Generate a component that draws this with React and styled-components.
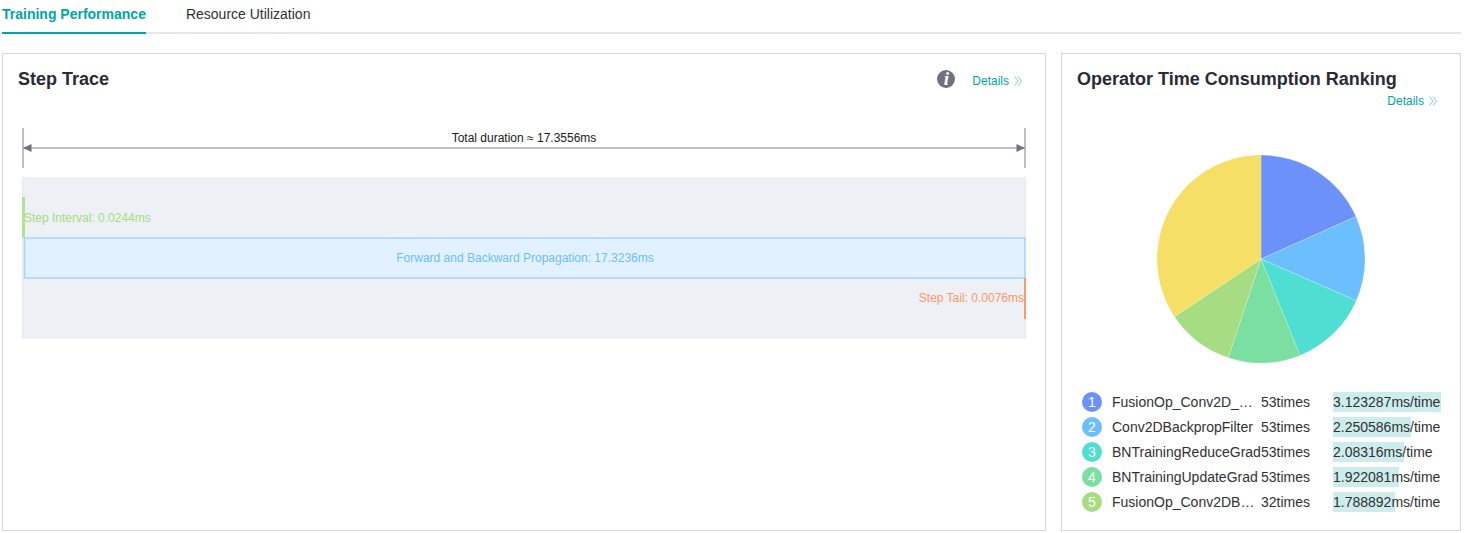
import React from "react";
import styled, { createGlobalStyle } from "styled-components";

const GlobalStyle = createGlobalStyle`
  html, body {
    margin: 0;
    padding: 0;
    background: #fff;
    font-family: "Liberation Sans", Arial, sans-serif;
  }
  * {
    box-sizing: border-box;
  }
`;

const St = {
  Page: styled.div`
    width: 1472px;
    height: 533px;
    padding: 0 11px 2px 2px;
    display: flex;
    flex-direction: column;
    overflow: hidden;
  `,
  Tabs: styled.div`
    display: flex;
    height: 34px;
    border-bottom: 2px solid #e4e7ed;
    flex-shrink: 0;
  `,
  Tab: styled.div`
    height: 34px;
    line-height: 29px;
    font-size: 14px;
    margin-right: 40px;
    font-weight: ${({ $active }) => ($active ? 700 : 400)};
    color: ${({ $active }) => ($active ? "#00a5a7" : "#303133")};
    border-bottom: 2px solid ${({ $active }) => ($active ? "#00a5a7" : "transparent")};
  `,
  Panels: styled.div`
    display: flex;
    gap: 15px;
    margin-top: 19px;
    flex: 1;
    min-height: 0;
  `,
  Panel: styled.section`
    border: 1px solid #d9d9d9;
    width: ${({ $width }) => $width}px;
    flex-shrink: 0;
    display: flex;
    flex-direction: column;
  `,
  Header: styled.div`
    display: flex;
    justify-content: space-between;
    height: 66px;
    padding: 15px 23px 0 15px;
  `,
  Title: styled.h2`
    margin: 0;
    font-size: 18px;
    line-height: 20px;
    font-weight: 700;
    color: #282b33;
  `,
  HeaderTools: styled.div`
    display: flex;
    align-items: flex-start;
    gap: 17px;
    padding-top: 2px;
  `,
  InfoIcon: styled.span`
    width: 18px;
    height: 18px;
    margin-top: -1px;
    border-radius: 50%;
    background: #6c7280;
    color: #fff;
    font-family: "Liberation Serif", serif;
    font-style: italic;
    font-weight: 700;
    font-size: 19px;
    line-height: 18px;
    text-align: center;
  `,
  Details: styled.a`
    display: inline-flex;
    align-items: center;
    gap: 5px;
    font-size: 12px;
    line-height: 20px;
    color: #00a5a7;
    svg {
      display: block;
    }
  `,
  Chart: styled.svg`
    display: block;
    text {
      font-family: "Liberation Sans", Arial, sans-serif;
      font-size: 12px;
    }
  `,
  RankHeader: styled.div`
    padding: 15px 15px 0;
  `,
  RankDetails: styled.div`
    display: flex;
    justify-content: flex-end;
    padding: 2px 8px 0 0;
    height: 22px;
  `,
  PieWrap: styled.div`
    height: 281px;
    flex-shrink: 0;
  `,
  List: styled.ul`
    list-style: none;
    margin: 0;
    padding: 0 0 0 20px;
    display: flex;
    flex-direction: column;
    gap: 5px;
  `,
  Row: styled.li`
    display: flex;
    align-items: center;
    height: 20px;
    font-size: 14px;
    color: #303133;
  `,
  Badge: styled.span`
    width: 20px;
    height: 20px;
    border-radius: 50%;
    background: ${({ $color }) => $color};
    color: #fff;
    text-align: center;
    line-height: 20px;
    flex-shrink: 0;
  `,
  Name: styled.span`
    width: 149px;
    margin-left: 10px;
    white-space: nowrap;
    overflow: hidden;
    text-overflow: ellipsis;
    flex-shrink: 0;
  `,
  Times: styled.span`
    width: 72px;
    flex-shrink: 0;
  `,
  Cost: styled.span`
    position: relative;
    white-space: nowrap;
    line-height: 20px;
  `,
  CostBar: styled.i`
    position: absolute;
    left: 0;
    top: 0;
    bottom: 0;
    background: #ccedeb;
  `,
  CostText: styled.span`
    position: relative;
  `,
};

const ChevronsRight = () => (
  <svg width="8" height="10" viewBox="0 0 8 10" fill="none" stroke="#8cc9cb" strokeWidth="1">
    <path d="M0.5 0.5L4 5L0.5 9.5" />
    <path d="M4 0.5L7.5 5L4 9.5" />
  </svg>
);

const StepTraceChart = () => (
  <St.Chart width="1042" height="220" viewBox="3 120 1042 220">
    <rect x="22.5" y="178" width="1003" height="160" fill="#edf0f5" stroke="#e8e9ec" />
    <path d="M23 128V168M1025 128V168" stroke="#a9acb5" strokeWidth="1.5" />
    <path d="M23 148H1025" stroke="#a9acb5" strokeWidth="1.5" />
    <path d="M23 148L31.5 144V152Z" fill="#6c7280" />
    <path d="M1025 148L1016.5 144V152Z" fill="#6c7280" />
    <text x="524" y="142" textAnchor="middle" fill="#1a1a1a">Total duration ≈ 17.3556ms</text>

    <rect x="22" y="197" width="3" height="41" fill="#b4e295" />
    <text x="24" y="222" fill="#a6dd82">Step Interval: 0.0244ms</text>

    <rect x="24.5" y="238" width="1000.3" height="40" fill="#e1f1ff" stroke="#a5d6ff" strokeWidth="1.5" />
    <text x="525" y="262" textAnchor="middle" fill="#6cbfff">Forward and Backward Propagation: 17.3236ms</text>

    <rect x="1024" y="278" width="2" height="41" fill="#ff9966" />
    <text x="1024" y="302" textAnchor="end" fill="#ff9966">Step Tail: 0.0076ms</text>
  </St.Chart>
);

const slices = [
  { color: "#6c92fa", to: 65.9 },
  { color: "#6cbfff", to: 113.6 },
  { color: "#4eded2", to: 158 },
  { color: "#7adfa0", to: 198.4 },
  { color: "#a6dd82", to: 236.3 },
  { color: "#f6df66", to: 360 },
];

const point = (deg) => {
  const rad = (deg * Math.PI) / 180;
  return `${(199 + 104 * Math.sin(rad)).toFixed(2)} ${(148 - 104 * Math.cos(rad)).toFixed(2)}`;
};

const Pie = () => (
  <svg width="398" height="281" viewBox="0 0 398 281" style={{ display: "block" }}>
    {slices.map((s, i) => {
      const from = i === 0 ? 0 : slices[i - 1].to;
      return (
        <path
          key={s.color}
          d={`M199 148L${point(from)}A104 104 0 ${s.to - from > 180 ? 1 : 0} 1 ${point(s.to)}Z`}
          fill={s.color}
          stroke="#fff"
          strokeWidth="0.2"
        />
      );
    })}
  </svg>
);

const operators = [
  { name: "FusionOp_Conv2D_BatchNorm", times: "53times", cost: "3.123287ms/time", bar: 107.5, color: "#6c92fa" },
  { name: "Conv2DBackpropFilter", times: "53times", cost: "2.250586ms/time", bar: 77.5, color: "#6cbfff" },
  { name: "BNTrainingReduceGrad", times: "53times", cost: "2.08316ms/time", bar: 71, color: "#4eded2" },
  { name: "BNTrainingUpdateGrad", times: "53times", cost: "1.922081ms/time", bar: 66, color: "#7adfa0" },
  { name: "FusionOp_Conv2DBackprop", times: "32times", cost: "1.788892ms/time", bar: 61.5, color: "#a6dd82" },
];

const App = () => {
  return (
    <St.Page>
      <GlobalStyle />
      <St.Tabs>
        <St.Tab $active>Training Performance</St.Tab>
        <St.Tab>Resource Utilization</St.Tab>
      </St.Tabs>
      <St.Panels>
        <St.Panel $width={1044}>
          <St.Header>
            <St.Title>Step Trace</St.Title>
            <St.HeaderTools>
              <St.InfoIcon>i</St.InfoIcon>
              <St.Details>
                Details <ChevronsRight />
              </St.Details>
            </St.HeaderTools>
          </St.Header>
          <StepTraceChart />
        </St.Panel>
        <St.Panel $width={400}>
          <St.RankHeader>
            <St.Title>Operator Time Consumption Ranking</St.Title>
            <St.RankDetails>
              <St.Details>
                Details <ChevronsRight />
              </St.Details>
            </St.RankDetails>
          </St.RankHeader>
          <St.PieWrap>
            <Pie />
          </St.PieWrap>
          <St.List>
            {operators.map((op, i) => (
              <St.Row key={op.name}>
                <St.Badge $color={op.color}>{i + 1}</St.Badge>
                <St.Name>{op.name}</St.Name>
                <St.Times>{op.times}</St.Times>
                <St.Cost>
                  <St.CostBar style={{ width: op.bar }} />
                  <St.CostText>{op.cost}</St.CostText>
                </St.Cost>
              </St.Row>
            ))}
          </St.List>
        </St.Panel>
      </St.Panels>
    </St.Page>
  );
};

export default App;
